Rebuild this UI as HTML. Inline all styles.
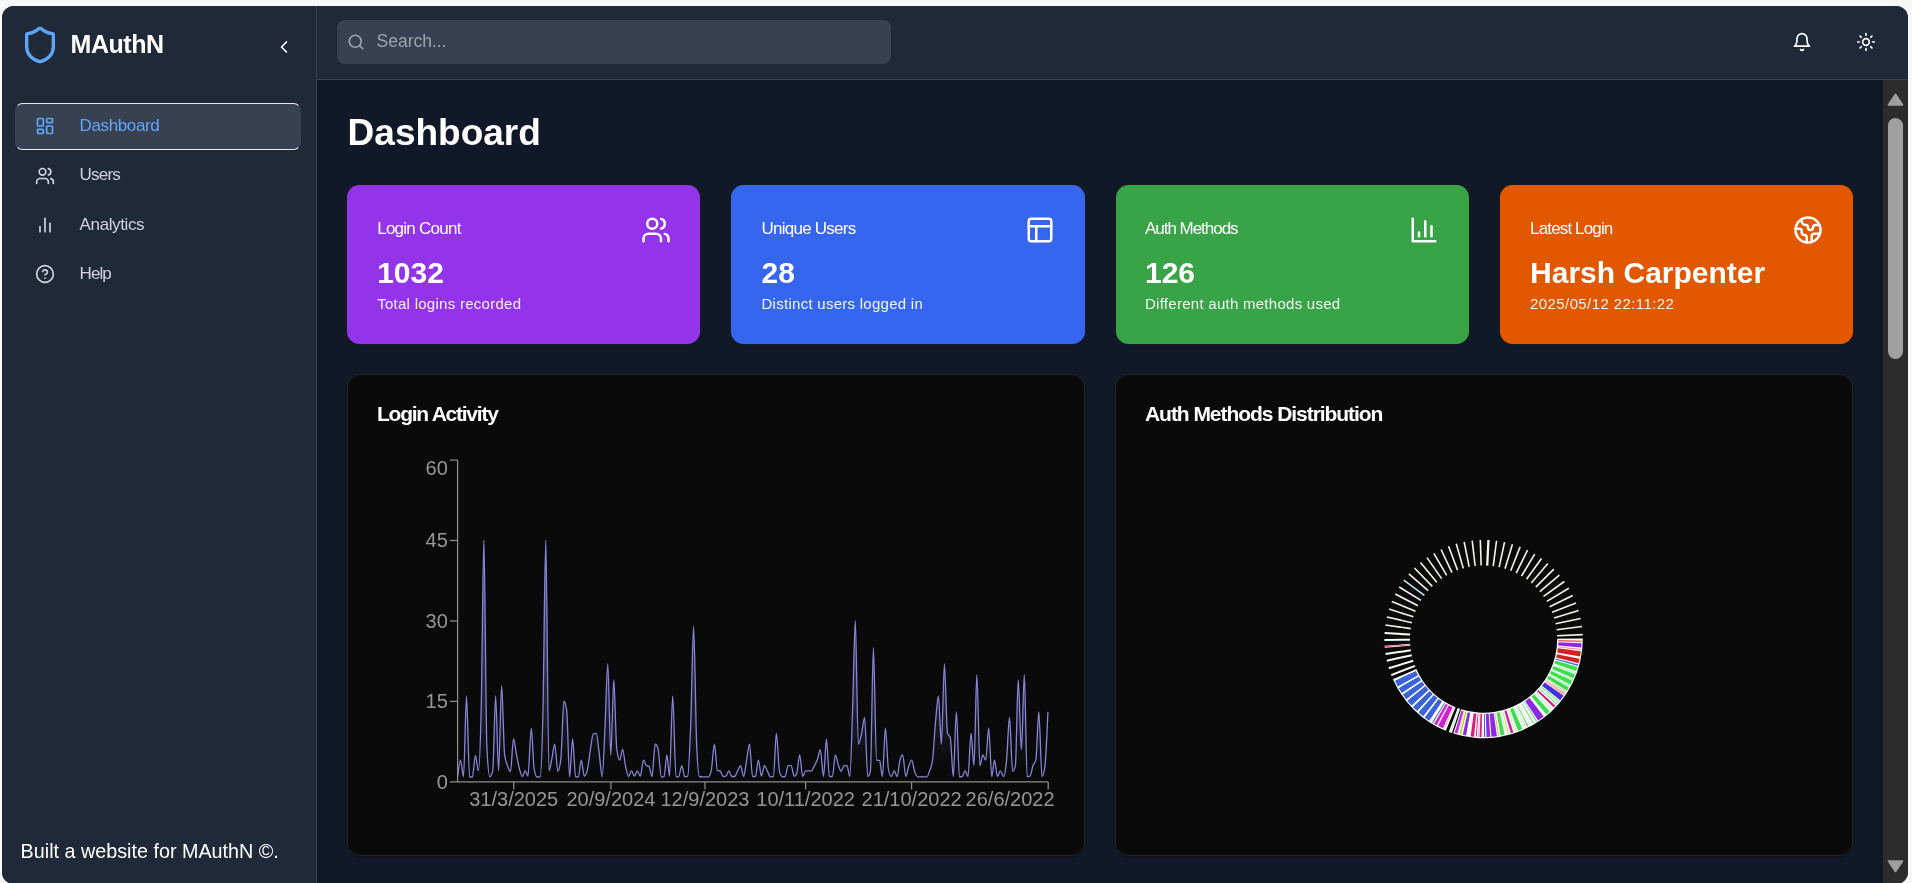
<!DOCTYPE html>
<html lang="en"><head><meta charset="utf-8"><title>MAuthN Dashboard</title>
<style>
html,body{margin:0;padding:0}
body{width:1912px;height:883px;overflow:hidden;background:#f7f7f7;font-family:"Liberation Sans",Arial,sans-serif;position:relative}
#app{position:absolute;left:2px;top:6px;width:1906px;height:878px;border-radius:12px;overflow:hidden;background:#111827}
#abs{will-change:transform;position:absolute;left:-2px;top:-6px;width:1912px;height:890px}
#abs>*{position:absolute}
.t{white-space:nowrap;line-height:1}
.ic{position:absolute;overflow:visible}
.box{box-sizing:border-box}
.card{box-sizing:border-box;border:1px solid #262626;border-radius:12.5px}
</style></head><body>
<div id="app"><div id="abs">

<div class="box" style="left:0;top:0;width:317px;height:890px;background:#1f2937;border-right:1px solid #374151"></div>
<div class="box" style="left:317px;top:0;width:1595px;height:80px;background:#1f2937;border-bottom:1px solid #374151"></div>
<div style="left:1883px;top:80px;width:25px;height:810px;background:#2c2c2c"></div>
<div style="left:1887.8px;top:117.6px;width:15.3px;height:241.5px;border-radius:8px;background:#9f9f9f"></div>
<svg style="left:1883px;top:80px" width="25" height="810"><path d="M12.5 14.5 L19.3 24.7 L5.7 24.7 Z" fill="#9f9f9f" stroke="#9f9f9f" stroke-width="2" stroke-linejoin="round"/><path d="M12.5 791.2 L19.3 781.2 L5.7 781.2 Z" fill="#9f9f9f" stroke="#9f9f9f" stroke-width="2" stroke-linejoin="round"/></svg>
<svg class="ic" style="left:20px;top:24.6px" width="40" height="40" viewBox="0 0 24 24" fill="none" stroke="#60a5fa" stroke-width="2" stroke-linecap="round" stroke-linejoin="round"><path d="M20 13c0 5-3.5 7.5-7.66 8.95a1 1 0 0 1-.67-.01C7.5 20.5 4 18 4 13V6a1 1 0 0 1 1-1c2 0 4.5-1.2 6.24-2.72a1.17 1.17 0 0 1 1.52 0C14.51 3.81 17 5 19 5a1 1 0 0 1 1 1z"/></svg>
<div class="t" style="left:70.50px;top:31.84px;font-size:25px;color:#fff;font-weight:700;letter-spacing:-0.45px;">MAuthN</div>
<svg class="ic" style="left:274px;top:36.7px" width="20" height="20" viewBox="0 0 24 24" fill="none" stroke="#fff" stroke-width="2" stroke-linecap="round" stroke-linejoin="round"><path d="m15 18-6-6 6-6"/></svg>
<div class="box" style="left:14.9px;top:102.7px;width:286.2px;height:47.7px;background:#374151;border:1.5px solid transparent;border-top-color:#e9e9e9;border-bottom-color:#e9e9e9;border-radius:7.5px"></div>
<svg class="ic" style="left:35px;top:116px" width="20" height="20" viewBox="0 0 24 24" fill="none" stroke="#60a5fa" stroke-width="2" stroke-linecap="round" stroke-linejoin="round"><rect width="7" height="9" x="3" y="3" rx="1"/><rect width="7" height="5" x="14" y="3" rx="1"/><rect width="7" height="9" x="14" y="12" rx="1"/><rect width="7" height="5" x="3" y="16" rx="1"/></svg>
<div class="t" style="left:79.60px;top:116.61px;font-size:17px;color:#60a5fa;letter-spacing:-0.38px;">Dashboard</div>
<svg class="ic" style="left:35px;top:166px" width="20" height="20" viewBox="0 0 24 24" fill="none" stroke="#d1d5db" stroke-width="2" stroke-linecap="round" stroke-linejoin="round"><path d="M16 21v-2a4 4 0 0 0-4-4H6a4 4 0 0 0-4 4v2"/><circle cx="9" cy="7" r="4"/><path d="M22 21v-2a4 4 0 0 0-3-3.87"/><path d="M16 3.13a4 4 0 0 1 0 7.75"/></svg>
<div class="t" style="left:79.60px;top:165.61px;font-size:17px;color:#d1d5db;letter-spacing:-0.8px;">Users</div>
<svg class="ic" style="left:35px;top:215px" width="20" height="20" viewBox="0 0 24 24" fill="none" stroke="#d1d5db" stroke-width="2" stroke-linecap="round" stroke-linejoin="round"><line x1="18" x2="18" y1="20" y2="10"/><line x1="12" x2="12" y1="20" y2="4"/><line x1="6" x2="6" y1="20" y2="14"/></svg>
<div class="t" style="left:79.60px;top:216.01px;font-size:17px;color:#d1d5db;letter-spacing:-0.38px;">Analytics</div>
<svg class="ic" style="left:35px;top:264px" width="20" height="20" viewBox="0 0 24 24" fill="none" stroke="#d1d5db" stroke-width="2" stroke-linecap="round" stroke-linejoin="round"><circle cx="12" cy="12" r="10"/><path d="M9.09 9a3 3 0 0 1 5.83 1c0 2-3 3-3 3"/><path d="M12 17h.01"/></svg>
<div class="t" style="left:79.60px;top:264.61px;font-size:17px;color:#d1d5db;letter-spacing:-0.95px;">Help</div>
<div class="t" style="left:20.60px;top:841.98px;font-size:19.75px;color:#fff;">Built a website for MAuthN ©.</div>
<div style="left:337px;top:20px;width:554px;height:44px;border-radius:8px;background:#374151"></div>
<svg class="ic" style="left:346.5px;top:32.5px" width="18" height="18" viewBox="0 0 24 24" fill="none" stroke="#9ca3af" stroke-width="2.2" stroke-linecap="round" stroke-linejoin="round"><circle cx="11" cy="11" r="8"/><path d="m21 21-4.3-4.3"/></svg>
<div class="t" style="left:376.50px;top:32.89px;font-size:17.5px;color:#9ca3af;">Search...</div>
<svg class="ic" style="left:1792px;top:32px" width="20" height="20" viewBox="0 0 24 24" fill="none" stroke="#fff" stroke-width="2" stroke-linecap="round" stroke-linejoin="round"><path d="M6 8a6 6 0 0 1 12 0c0 7 3 9 3 9H3s3-2 3-9"/><path d="M10.3 21a1.94 1.94 0 0 0 3.4 0"/></svg>
<svg class="ic" style="left:1856px;top:32px" width="20" height="20" viewBox="0 0 24 24" fill="none" stroke="#fff" stroke-width="2" stroke-linecap="round" stroke-linejoin="round"><circle cx="12" cy="12" r="4"/><path d="M12 2v2"/><path d="M12 20v2"/><path d="m4.93 4.93 1.41 1.41"/><path d="m17.66 17.66 1.41 1.41"/><path d="M2 12h2"/><path d="M20 12h2"/><path d="m6.34 17.66-1.41 1.41"/><path d="m19.07 4.93-1.41 1.41"/></svg>
<div class="t" style="left:347.60px;top:113.68px;font-size:37px;color:#fff;font-weight:700;">Dashboard</div>
<div style="left:347.0px;top:185px;width:353.3px;height:159px;border-radius:12.5px;box-shadow:0 0 0 0.7px #1a1f1a;background:#9333ea"></div>
<div class="t" style="left:377.20px;top:219.61px;font-size:17px;color:#fff;letter-spacing:-0.75px;">Login Count</div>
<div class="t" style="left:377.20px;top:258.41px;font-size:30px;color:#fff;font-weight:700;">1032</div>
<div class="t" style="left:377.20px;top:296.00px;font-size:15px;color:rgba(255,255,255,.93);letter-spacing:0.27px;">Total logins recorded</div>
<svg class="ic" style="left:641.3px;top:215px" width="30" height="30" viewBox="0 0 24 24" fill="none" stroke="#fff" stroke-width="2" stroke-linecap="round" stroke-linejoin="round"><path d="M16 21v-2a4 4 0 0 0-4-4H6a4 4 0 0 0-4 4v2"/><circle cx="9" cy="7" r="4"/><path d="M22 21v-2a4 4 0 0 0-3-3.87"/><path d="M16 3.13a4 4 0 0 1 0 7.75"/></svg>
<div style="left:731.3px;top:185px;width:353.3px;height:159px;border-radius:12.5px;box-shadow:0 0 0 0.7px #1a1f1a;background:#3766ee"></div>
<div class="t" style="left:761.50px;top:219.61px;font-size:17px;color:#fff;letter-spacing:-0.75px;">Unique Users</div>
<div class="t" style="left:761.50px;top:258.41px;font-size:30px;color:#fff;font-weight:700;">28</div>
<div class="t" style="left:761.50px;top:296.00px;font-size:15px;color:rgba(255,255,255,.93);letter-spacing:0.27px;">Distinct users logged in</div>
<svg class="ic" style="left:1024.9px;top:215px" width="30" height="30" viewBox="0 0 24 24" fill="none" stroke="#fff" stroke-width="2" stroke-linecap="round" stroke-linejoin="round"><rect width="18" height="18" x="3" y="3" rx="2"/><path d="M3 9h18"/><path d="M9 21V9"/></svg>
<div style="left:1115.6px;top:185px;width:353.3px;height:159px;border-radius:12.5px;box-shadow:0 0 0 0.7px #1a1f1a;background:#38a347"></div>
<div class="t" style="left:1145.00px;top:219.61px;font-size:17px;color:#fff;letter-spacing:-1.03px;">Auth Methods</div>
<div class="t" style="left:1145.00px;top:258.41px;font-size:30px;color:#fff;font-weight:700;">126</div>
<div class="t" style="left:1145.00px;top:296.00px;font-size:15px;color:rgba(255,255,255,.93);letter-spacing:0.27px;">Different auth methods used</div>
<svg class="ic" style="left:1409.2px;top:215px" width="30" height="30" viewBox="0 0 24 24" fill="none" stroke="#fff" stroke-width="2" stroke-linecap="round" stroke-linejoin="round"><path d="M3 3v18h18"/><path d="M18 17V9"/><path d="M13 17V5"/><path d="M8 17v-3"/></svg>
<div style="left:1499.9px;top:185px;width:353.3px;height:159px;border-radius:12.5px;box-shadow:0 0 0 0.7px #1a1f1a;background:#e25800"></div>
<div class="t" style="left:1530.10px;top:219.61px;font-size:17px;color:#fff;letter-spacing:-0.86px;">Latest Login</div>
<div class="t" style="left:1530.10px;top:258.41px;font-size:30px;color:#fff;font-weight:700;">Harsh Carpenter</div>
<div class="t" style="left:1530.10px;top:296.00px;font-size:15px;color:rgba(255,255,255,.93);letter-spacing:0.4px;">2025/05/12 22:11:22</div>
<svg class="ic" style="left:1793.4px;top:215px" width="30" height="30" viewBox="0 0 24 24" fill="none" stroke="#fff" stroke-width="2" stroke-linecap="round" stroke-linejoin="round"><path d="M21.54 15H17a2 2 0 0 0-2 2v4.54"/><path d="M7 3.34V5a3 3 0 0 0 3 3a2 2 0 0 1 2 2c0 1.1.9 2 2 2a2 2 0 0 0 2-2c0-1.1.9-2 2-2h3.17"/><path d="M11 21.95V18a2 2 0 0 0-2-2a2 2 0 0 1-2-2v-1a2 2 0 0 0-2-2H2.05"/><circle cx="12" cy="12" r="10"/></svg>
<div class="card" style="left:347px;top:374.4px;width:738px;height:481.5px;background:#0a0a0a;box-shadow:0 1px 2px rgba(0,0,0,.35)"></div>
<div class="card" style="left:1115px;top:374.4px;width:738px;height:481.5px;background:#0a0a0a;box-shadow:0 1px 2px rgba(0,0,0,.35)"></div>
<div class="t" style="left:377.00px;top:403.22px;font-size:21px;color:#fff;font-weight:700;letter-spacing:-1.25px;">Login Activity</div>
<div class="t" style="left:1145.00px;top:403.22px;font-size:21px;color:#fff;font-weight:700;letter-spacing:-1.05px;">Auth Methods Distribution</div>
<svg style="left:0;top:0" width="1912" height="883" font-family="Liberation Sans, Arial, sans-serif" font-size="20" fill="#969696">
<defs><linearGradient id="g" x1="0" y1="0" x2="0" y2="1"><stop offset="5%" stop-color="#8884d8" stop-opacity="0.55"/><stop offset="95%" stop-color="#8884d8" stop-opacity="0"/></linearGradient></defs>
<path d="M457.6,776.8C458.6,768.4,459.5,760.1,460.5,760.1C461.5,760.1,462.5,776.5,463.5,776.5C464.5,776.5,465.5,696.0,466.5,696.0C467.5,696.0,468.5,777.0,469.6,777.0C470.5,777.0,471.5,777.0,472.4,777.0C473.4,777.0,474.4,755.3,475.4,755.3C476.4,755.3,477.4,770.9,478.4,770.9C479.3,770.9,480.3,747.5,481.2,709.1C482.1,670.6,483.0,540.3,483.9,540.3C484.9,540.3,485.9,729.0,486.9,748.1C487.9,767.2,488.9,776.8,489.9,776.8C490.9,776.8,491.8,774.6,492.8,770.3C493.7,765.9,494.7,696.0,495.6,696.0C496.6,696.0,497.6,770.9,498.6,770.9C499.6,770.9,500.6,685.4,501.6,685.4C502.6,685.4,503.6,746.9,504.6,754.6C505.6,762.0,506.5,762.9,507.5,765.7C508.5,768.6,509.5,771.3,510.5,771.3C511.5,771.3,512.5,739.0,513.5,739.0C514.5,739.0,515.5,749.6,516.5,754.6C517.5,759.6,518.5,765.3,519.5,769.0C520.4,772.5,521.4,776.5,522.3,776.5C523.3,776.5,524.3,770.9,525.3,770.9C526.2,770.9,527.0,776.1,527.9,776.1C529.0,776.1,530.2,728.3,531.3,728.3C532.3,728.3,533.2,764.9,534.2,769.6C535.2,774.6,536.2,777.0,537.2,777.0C538.2,777.0,539.2,776.9,540.2,776.8C541.1,776.6,542.1,750.2,543.0,709.1C543.9,669.8,544.8,540.3,545.8,540.3C546.8,540.3,547.9,770.9,549.0,770.9C550.0,770.9,550.9,763.0,551.9,758.5C552.8,754.1,553.8,744.2,554.7,744.2C555.8,744.2,556.8,771.3,557.9,771.3C558.9,771.3,559.9,767.0,560.9,758.5C561.9,750.0,562.9,701.2,563.9,701.2C564.8,701.2,565.8,704.3,566.7,710.4C567.7,716.4,568.6,776.8,569.6,776.8C570.6,776.8,571.6,739.0,572.6,739.0C573.6,739.0,574.6,777.0,575.6,777.0C576.5,777.0,577.5,776.9,578.4,776.8C579.4,776.6,580.3,760.1,581.3,760.1C582.3,760.1,583.3,776.1,584.3,776.1C585.3,776.1,586.3,774.2,587.3,770.3C588.3,766.2,589.4,755.7,590.4,749.4C591.4,743.7,592.3,734.0,593.3,733.8C594.3,733.5,595.3,733.4,596.3,733.4C597.3,733.4,598.2,746.3,599.2,753.3C600.2,760.7,601.2,776.8,602.2,776.8C603.1,776.8,604.1,746.7,605.0,727.3C605.9,708.8,606.8,663.8,607.8,663.8C608.8,663.8,609.8,755.3,610.8,755.3C611.8,755.3,612.8,679.8,613.8,679.8C614.7,679.8,615.7,740.1,616.7,748.1C617.7,756.1,618.7,760.1,619.7,760.1C620.7,760.1,621.6,749.4,622.6,749.4C623.6,749.4,624.6,761.8,625.6,766.4C626.6,770.9,627.6,776.5,628.6,776.5C629.5,776.5,630.5,770.9,631.5,770.9C632.5,770.9,633.5,776.1,634.5,776.1C635.4,776.1,636.4,770.9,637.3,770.9C638.3,770.9,639.3,776.1,640.3,776.1C641.4,776.1,642.4,760.1,643.4,760.1C644.4,760.1,645.4,765.2,646.4,765.7C647.3,766.1,648.2,765.9,649.0,766.4C650.0,766.9,651.0,776.5,652.0,776.5C653.1,776.5,654.1,744.2,655.2,744.2C656.1,744.2,657.0,745.5,657.9,748.1C659.1,751.5,660.2,776.8,661.4,776.8C662.3,776.8,663.1,776.8,664.0,776.8C665.0,776.8,665.9,754.9,666.9,754.9C667.7,754.9,668.6,776.1,669.5,776.1C670.6,776.1,671.6,696.0,672.7,696.0C673.8,696.0,674.9,776.8,676.0,776.8C676.9,776.8,677.8,776.8,678.7,776.8C679.7,776.8,680.7,765.7,681.7,765.7C682.8,765.7,683.8,776.8,684.8,776.8C685.8,776.8,686.8,776.6,687.7,776.1C688.7,775.7,689.7,750.6,690.7,724.7C691.7,699.9,692.6,626.1,693.6,626.1C694.6,626.1,695.6,719.5,696.6,742.9C697.5,765.3,698.5,776.3,699.4,776.5C700.4,776.7,701.4,776.8,702.4,776.8C703.4,776.8,704.4,776.8,705.4,776.8C706.4,776.8,707.3,776.8,708.3,776.8C709.3,776.8,710.3,774.6,711.3,770.3C712.3,765.7,713.4,744.2,714.4,744.2C715.4,744.2,716.4,769.8,717.4,770.3C718.3,770.7,719.1,770.5,720.0,770.9C721.1,771.5,722.2,776.5,723.3,776.5C724.1,776.5,725.0,776.4,725.9,776.1C726.9,775.8,727.9,770.9,728.9,770.9C729.8,770.9,730.8,776.5,731.7,776.5C732.7,776.5,733.6,776.5,734.6,776.5C735.6,776.5,736.6,772.7,737.6,770.9C738.6,769.1,739.6,765.7,740.6,765.7C741.6,765.7,742.6,776.5,743.6,776.5C744.5,776.5,745.5,766.4,746.5,761.1C747.5,755.7,748.5,744.2,749.5,744.2C750.5,744.2,751.5,776.5,752.6,776.5C753.5,776.5,754.5,776.5,755.4,776.5C756.4,776.5,757.4,760.1,758.4,760.1C759.4,760.1,760.4,776.1,761.4,776.1C762.4,776.1,763.4,765.7,764.4,765.7C765.5,765.7,766.5,769.6,767.6,771.6C768.5,773.3,769.5,776.8,770.4,776.8C771.4,776.8,772.4,776.7,773.4,776.5C774.4,776.3,775.4,733.4,776.4,733.4C777.4,733.4,778.5,767.9,779.5,771.6C780.5,775.0,781.5,776.8,782.5,776.8C783.4,776.8,784.3,776.7,785.1,776.5C786.1,776.3,787.1,765.7,788.1,765.7C789.1,765.7,790.0,765.7,791.0,765.7C792.1,765.7,793.2,776.1,794.2,776.1C795.1,776.1,796.0,775.0,796.8,772.9C797.8,770.5,798.8,754.9,799.7,754.9C800.7,754.9,801.7,776.5,802.7,776.5C803.7,776.5,804.7,770.9,805.7,770.9C806.7,770.9,807.6,770.9,808.6,770.9C809.6,770.9,810.6,770.9,811.6,770.9C812.5,770.9,813.5,767.5,814.4,765.7C815.4,763.9,816.3,762.4,817.3,759.8C818.3,757.1,819.3,749.7,820.3,749.7C821.4,749.7,822.5,776.5,823.5,776.5C824.5,776.5,825.5,739.0,826.4,739.0C827.4,739.0,828.4,776.5,829.4,776.5C830.4,776.5,831.4,776.5,832.4,776.5C833.4,776.5,834.4,754.9,835.4,754.9C836.4,754.9,837.5,762.8,838.5,765.7C839.4,768.1,840.3,771.3,841.1,771.3C842.1,771.3,843.1,765.7,844.1,765.7C845.1,765.7,846.0,765.7,847.0,765.7C847.9,765.7,848.9,776.5,849.8,776.5C850.8,776.5,851.7,735.0,852.6,709.1C853.5,683.1,854.4,620.8,855.3,620.8C856.3,620.8,857.3,744.2,858.3,744.2C859.3,744.2,860.3,739.3,861.3,735.1C862.4,730.6,863.5,717.5,864.6,717.5C865.6,717.5,866.7,776.5,867.8,776.5C868.7,776.5,869.5,774.9,870.4,771.6C871.4,767.8,872.4,647.6,873.4,647.6C874.5,647.6,875.5,759.8,876.6,760.1C877.6,760.4,878.6,760.2,879.6,760.5C880.5,760.7,881.5,776.5,882.4,776.5C883.4,776.5,884.4,728.2,885.4,728.2C886.4,728.2,887.4,763.7,888.4,769.0C889.4,774.0,890.3,776.5,891.3,776.5C892.3,776.5,893.3,770.9,894.3,770.9C895.2,770.9,896.2,776.5,897.1,776.5C898.1,776.5,899.0,763.4,900.0,759.8C900.9,756.6,901.7,754.9,902.6,754.9C903.7,754.9,904.8,776.5,905.9,776.5C906.9,776.5,907.9,768.5,908.9,765.7C909.8,763.1,910.8,760.1,911.7,760.1C912.7,760.1,913.7,768.8,914.7,771.6C915.7,774.3,916.7,776.8,917.7,776.8C918.7,776.8,919.6,776.8,920.6,776.8C921.6,776.8,922.6,776.8,923.6,776.8C924.7,776.8,925.7,776.8,926.8,776.8C927.8,776.8,928.7,773.7,929.7,770.9C930.6,768.1,931.6,767.2,932.6,759.8C933.6,752.1,934.5,732.9,935.5,722.1C936.5,711.8,937.5,696.0,938.4,696.0C939.4,696.0,940.4,744.2,941.4,744.2C942.4,744.2,943.4,663.8,944.4,663.8C945.4,663.8,946.5,730.1,947.5,733.4C948.4,736.3,949.3,734.8,950.3,737.7C951.3,740.8,952.3,776.5,953.3,776.5C954.3,776.5,955.3,711.9,956.4,711.9C957.4,711.9,958.4,776.8,959.4,776.8C960.3,776.8,961.3,776.7,962.2,776.5C963.2,776.3,964.1,770.9,965.1,770.9C966.1,770.9,967.0,776.5,968.0,776.5C969.0,776.5,970.0,733.4,971.0,733.4C972.0,733.4,973.0,765.7,974.0,765.7C974.9,765.7,975.9,674.6,976.8,674.6C977.9,674.6,978.9,765.7,979.9,765.7C980.9,765.7,981.9,754.9,982.8,754.9C983.8,754.9,984.7,760.1,985.7,760.1C986.7,760.1,987.7,728.2,988.7,728.2C989.7,728.2,990.8,776.5,991.8,776.5C992.7,776.5,993.6,760.1,994.5,760.1C995.5,760.1,996.4,776.5,997.4,776.5C998.4,776.5,999.3,770.9,1000.3,770.9C1001.3,770.9,1002.4,776.5,1003.5,776.5C1004.5,776.5,1005.5,771.0,1006.5,761.1C1007.5,751.3,1008.5,717.5,1009.5,717.5C1010.5,717.5,1011.6,771.3,1012.6,771.3C1013.5,771.3,1014.5,769.4,1015.4,765.7C1016.3,761.8,1017.3,679.8,1018.2,679.8C1019.3,679.8,1020.3,749.7,1021.4,749.7C1022.4,749.7,1023.4,674.6,1024.3,674.6C1025.3,674.6,1026.2,776.5,1027.1,776.5C1028.1,776.5,1029.1,776.4,1030.1,776.1C1031.0,775.9,1032.0,768.4,1032.9,765.7C1033.9,762.9,1034.9,763.8,1035.9,759.8C1036.9,756.1,1037.8,711.9,1038.8,711.9C1039.9,711.9,1040.9,776.5,1042.0,776.5C1043.0,776.5,1043.9,773.1,1044.9,766.4C1045.9,759.3,1046.9,735.6,1047.9,711.9L1047.9,781.8L457.6,781.8Z" fill="url(#g)" stroke="none"/>
<path d="M457.6,776.8C458.6,768.4,459.5,760.1,460.5,760.1C461.5,760.1,462.5,776.5,463.5,776.5C464.5,776.5,465.5,696.0,466.5,696.0C467.5,696.0,468.5,777.0,469.6,777.0C470.5,777.0,471.5,777.0,472.4,777.0C473.4,777.0,474.4,755.3,475.4,755.3C476.4,755.3,477.4,770.9,478.4,770.9C479.3,770.9,480.3,747.5,481.2,709.1C482.1,670.6,483.0,540.3,483.9,540.3C484.9,540.3,485.9,729.0,486.9,748.1C487.9,767.2,488.9,776.8,489.9,776.8C490.9,776.8,491.8,774.6,492.8,770.3C493.7,765.9,494.7,696.0,495.6,696.0C496.6,696.0,497.6,770.9,498.6,770.9C499.6,770.9,500.6,685.4,501.6,685.4C502.6,685.4,503.6,746.9,504.6,754.6C505.6,762.0,506.5,762.9,507.5,765.7C508.5,768.6,509.5,771.3,510.5,771.3C511.5,771.3,512.5,739.0,513.5,739.0C514.5,739.0,515.5,749.6,516.5,754.6C517.5,759.6,518.5,765.3,519.5,769.0C520.4,772.5,521.4,776.5,522.3,776.5C523.3,776.5,524.3,770.9,525.3,770.9C526.2,770.9,527.0,776.1,527.9,776.1C529.0,776.1,530.2,728.3,531.3,728.3C532.3,728.3,533.2,764.9,534.2,769.6C535.2,774.6,536.2,777.0,537.2,777.0C538.2,777.0,539.2,776.9,540.2,776.8C541.1,776.6,542.1,750.2,543.0,709.1C543.9,669.8,544.8,540.3,545.8,540.3C546.8,540.3,547.9,770.9,549.0,770.9C550.0,770.9,550.9,763.0,551.9,758.5C552.8,754.1,553.8,744.2,554.7,744.2C555.8,744.2,556.8,771.3,557.9,771.3C558.9,771.3,559.9,767.0,560.9,758.5C561.9,750.0,562.9,701.2,563.9,701.2C564.8,701.2,565.8,704.3,566.7,710.4C567.7,716.4,568.6,776.8,569.6,776.8C570.6,776.8,571.6,739.0,572.6,739.0C573.6,739.0,574.6,777.0,575.6,777.0C576.5,777.0,577.5,776.9,578.4,776.8C579.4,776.6,580.3,760.1,581.3,760.1C582.3,760.1,583.3,776.1,584.3,776.1C585.3,776.1,586.3,774.2,587.3,770.3C588.3,766.2,589.4,755.7,590.4,749.4C591.4,743.7,592.3,734.0,593.3,733.8C594.3,733.5,595.3,733.4,596.3,733.4C597.3,733.4,598.2,746.3,599.2,753.3C600.2,760.7,601.2,776.8,602.2,776.8C603.1,776.8,604.1,746.7,605.0,727.3C605.9,708.8,606.8,663.8,607.8,663.8C608.8,663.8,609.8,755.3,610.8,755.3C611.8,755.3,612.8,679.8,613.8,679.8C614.7,679.8,615.7,740.1,616.7,748.1C617.7,756.1,618.7,760.1,619.7,760.1C620.7,760.1,621.6,749.4,622.6,749.4C623.6,749.4,624.6,761.8,625.6,766.4C626.6,770.9,627.6,776.5,628.6,776.5C629.5,776.5,630.5,770.9,631.5,770.9C632.5,770.9,633.5,776.1,634.5,776.1C635.4,776.1,636.4,770.9,637.3,770.9C638.3,770.9,639.3,776.1,640.3,776.1C641.4,776.1,642.4,760.1,643.4,760.1C644.4,760.1,645.4,765.2,646.4,765.7C647.3,766.1,648.2,765.9,649.0,766.4C650.0,766.9,651.0,776.5,652.0,776.5C653.1,776.5,654.1,744.2,655.2,744.2C656.1,744.2,657.0,745.5,657.9,748.1C659.1,751.5,660.2,776.8,661.4,776.8C662.3,776.8,663.1,776.8,664.0,776.8C665.0,776.8,665.9,754.9,666.9,754.9C667.7,754.9,668.6,776.1,669.5,776.1C670.6,776.1,671.6,696.0,672.7,696.0C673.8,696.0,674.9,776.8,676.0,776.8C676.9,776.8,677.8,776.8,678.7,776.8C679.7,776.8,680.7,765.7,681.7,765.7C682.8,765.7,683.8,776.8,684.8,776.8C685.8,776.8,686.8,776.6,687.7,776.1C688.7,775.7,689.7,750.6,690.7,724.7C691.7,699.9,692.6,626.1,693.6,626.1C694.6,626.1,695.6,719.5,696.6,742.9C697.5,765.3,698.5,776.3,699.4,776.5C700.4,776.7,701.4,776.8,702.4,776.8C703.4,776.8,704.4,776.8,705.4,776.8C706.4,776.8,707.3,776.8,708.3,776.8C709.3,776.8,710.3,774.6,711.3,770.3C712.3,765.7,713.4,744.2,714.4,744.2C715.4,744.2,716.4,769.8,717.4,770.3C718.3,770.7,719.1,770.5,720.0,770.9C721.1,771.5,722.2,776.5,723.3,776.5C724.1,776.5,725.0,776.4,725.9,776.1C726.9,775.8,727.9,770.9,728.9,770.9C729.8,770.9,730.8,776.5,731.7,776.5C732.7,776.5,733.6,776.5,734.6,776.5C735.6,776.5,736.6,772.7,737.6,770.9C738.6,769.1,739.6,765.7,740.6,765.7C741.6,765.7,742.6,776.5,743.6,776.5C744.5,776.5,745.5,766.4,746.5,761.1C747.5,755.7,748.5,744.2,749.5,744.2C750.5,744.2,751.5,776.5,752.6,776.5C753.5,776.5,754.5,776.5,755.4,776.5C756.4,776.5,757.4,760.1,758.4,760.1C759.4,760.1,760.4,776.1,761.4,776.1C762.4,776.1,763.4,765.7,764.4,765.7C765.5,765.7,766.5,769.6,767.6,771.6C768.5,773.3,769.5,776.8,770.4,776.8C771.4,776.8,772.4,776.7,773.4,776.5C774.4,776.3,775.4,733.4,776.4,733.4C777.4,733.4,778.5,767.9,779.5,771.6C780.5,775.0,781.5,776.8,782.5,776.8C783.4,776.8,784.3,776.7,785.1,776.5C786.1,776.3,787.1,765.7,788.1,765.7C789.1,765.7,790.0,765.7,791.0,765.7C792.1,765.7,793.2,776.1,794.2,776.1C795.1,776.1,796.0,775.0,796.8,772.9C797.8,770.5,798.8,754.9,799.7,754.9C800.7,754.9,801.7,776.5,802.7,776.5C803.7,776.5,804.7,770.9,805.7,770.9C806.7,770.9,807.6,770.9,808.6,770.9C809.6,770.9,810.6,770.9,811.6,770.9C812.5,770.9,813.5,767.5,814.4,765.7C815.4,763.9,816.3,762.4,817.3,759.8C818.3,757.1,819.3,749.7,820.3,749.7C821.4,749.7,822.5,776.5,823.5,776.5C824.5,776.5,825.5,739.0,826.4,739.0C827.4,739.0,828.4,776.5,829.4,776.5C830.4,776.5,831.4,776.5,832.4,776.5C833.4,776.5,834.4,754.9,835.4,754.9C836.4,754.9,837.5,762.8,838.5,765.7C839.4,768.1,840.3,771.3,841.1,771.3C842.1,771.3,843.1,765.7,844.1,765.7C845.1,765.7,846.0,765.7,847.0,765.7C847.9,765.7,848.9,776.5,849.8,776.5C850.8,776.5,851.7,735.0,852.6,709.1C853.5,683.1,854.4,620.8,855.3,620.8C856.3,620.8,857.3,744.2,858.3,744.2C859.3,744.2,860.3,739.3,861.3,735.1C862.4,730.6,863.5,717.5,864.6,717.5C865.6,717.5,866.7,776.5,867.8,776.5C868.7,776.5,869.5,774.9,870.4,771.6C871.4,767.8,872.4,647.6,873.4,647.6C874.5,647.6,875.5,759.8,876.6,760.1C877.6,760.4,878.6,760.2,879.6,760.5C880.5,760.7,881.5,776.5,882.4,776.5C883.4,776.5,884.4,728.2,885.4,728.2C886.4,728.2,887.4,763.7,888.4,769.0C889.4,774.0,890.3,776.5,891.3,776.5C892.3,776.5,893.3,770.9,894.3,770.9C895.2,770.9,896.2,776.5,897.1,776.5C898.1,776.5,899.0,763.4,900.0,759.8C900.9,756.6,901.7,754.9,902.6,754.9C903.7,754.9,904.8,776.5,905.9,776.5C906.9,776.5,907.9,768.5,908.9,765.7C909.8,763.1,910.8,760.1,911.7,760.1C912.7,760.1,913.7,768.8,914.7,771.6C915.7,774.3,916.7,776.8,917.7,776.8C918.7,776.8,919.6,776.8,920.6,776.8C921.6,776.8,922.6,776.8,923.6,776.8C924.7,776.8,925.7,776.8,926.8,776.8C927.8,776.8,928.7,773.7,929.7,770.9C930.6,768.1,931.6,767.2,932.6,759.8C933.6,752.1,934.5,732.9,935.5,722.1C936.5,711.8,937.5,696.0,938.4,696.0C939.4,696.0,940.4,744.2,941.4,744.2C942.4,744.2,943.4,663.8,944.4,663.8C945.4,663.8,946.5,730.1,947.5,733.4C948.4,736.3,949.3,734.8,950.3,737.7C951.3,740.8,952.3,776.5,953.3,776.5C954.3,776.5,955.3,711.9,956.4,711.9C957.4,711.9,958.4,776.8,959.4,776.8C960.3,776.8,961.3,776.7,962.2,776.5C963.2,776.3,964.1,770.9,965.1,770.9C966.1,770.9,967.0,776.5,968.0,776.5C969.0,776.5,970.0,733.4,971.0,733.4C972.0,733.4,973.0,765.7,974.0,765.7C974.9,765.7,975.9,674.6,976.8,674.6C977.9,674.6,978.9,765.7,979.9,765.7C980.9,765.7,981.9,754.9,982.8,754.9C983.8,754.9,984.7,760.1,985.7,760.1C986.7,760.1,987.7,728.2,988.7,728.2C989.7,728.2,990.8,776.5,991.8,776.5C992.7,776.5,993.6,760.1,994.5,760.1C995.5,760.1,996.4,776.5,997.4,776.5C998.4,776.5,999.3,770.9,1000.3,770.9C1001.3,770.9,1002.4,776.5,1003.5,776.5C1004.5,776.5,1005.5,771.0,1006.5,761.1C1007.5,751.3,1008.5,717.5,1009.5,717.5C1010.5,717.5,1011.6,771.3,1012.6,771.3C1013.5,771.3,1014.5,769.4,1015.4,765.7C1016.3,761.8,1017.3,679.8,1018.2,679.8C1019.3,679.8,1020.3,749.7,1021.4,749.7C1022.4,749.7,1023.4,674.6,1024.3,674.6C1025.3,674.6,1026.2,776.5,1027.1,776.5C1028.1,776.5,1029.1,776.4,1030.1,776.1C1031.0,775.9,1032.0,768.4,1032.9,765.7C1033.9,762.9,1034.9,763.8,1035.9,759.8C1036.9,756.1,1037.8,711.9,1038.8,711.9C1039.9,711.9,1040.9,776.5,1042.0,776.5C1043.0,776.5,1043.9,773.1,1044.9,766.4C1045.9,759.3,1046.9,735.6,1047.9,711.9" fill="none" stroke="#8884d8" stroke-width="1.3"/>
<g stroke="#8e8e8e" stroke-width="1.25" fill="none">
<path d="M457.6,460V781.9"/><path d="M457.6,781.9H1048.2"/>
<path d="M450,460.1H457.6"/>
<path d="M450,540.5H457.6"/>
<path d="M450,621H457.6"/>
<path d="M450,701.4H457.6"/>
<path d="M450,781.9H457.6"/>
<path d="M513.7,781.9V789.4"/>
<path d="M610.9,781.9V789.4"/>
<path d="M705,781.9V789.4"/>
<path d="M805.6,781.9V789.4"/>
<path d="M911.6,781.9V789.4"/>
<path d="M1048.2,781.9V789.4"/>
</g>
<text x="447.8" y="475.2" text-anchor="end">60</text>
<text x="447.8" y="547.3" text-anchor="end">45</text>
<text x="447.8" y="627.8" text-anchor="end">30</text>
<text x="447.8" y="708.2" text-anchor="end">15</text>
<text x="447.8" y="788.7" text-anchor="end">0</text>
<text x="513.7" y="805.9" text-anchor="middle">31/3/2025</text>
<text x="610.9" y="805.9" text-anchor="middle">20/9/2024</text>
<text x="705" y="805.9" text-anchor="middle">12/9/2023</text>
<text x="805.6" y="805.9" text-anchor="middle">10/11/2022</text>
<text x="911.6" y="805.9" text-anchor="middle">21/10/2022</text>
<text x="1054.6" y="805.9" text-anchor="end">26/6/2022</text>
<line x1="1557.12" y1="635.76" x2="1582.70" y2="634.60" stroke="#f4f4ee" stroke-width="1.6"/>
<line x1="1556.60" y1="629.75" x2="1582.00" y2="626.50" stroke="#f4f4ee" stroke-width="1.6"/>
<line x1="1555.59" y1="623.80" x2="1580.63" y2="618.48" stroke="#f4f4ee" stroke-width="1.6"/>
<line x1="1554.10" y1="617.95" x2="1578.62" y2="610.59" stroke="#f4f4ee" stroke-width="1.6"/>
<line x1="1552.13" y1="612.25" x2="1575.96" y2="602.90" stroke="#f4f4ee" stroke-width="1.6"/>
<line x1="1549.69" y1="606.72" x2="1572.68" y2="595.46" stroke="#f4f4ee" stroke-width="1.6"/>
<line x1="1546.82" y1="601.41" x2="1568.81" y2="588.31" stroke="#f4f4ee" stroke-width="1.6"/>
<line x1="1543.52" y1="596.36" x2="1564.36" y2="581.49" stroke="#f4f4ee" stroke-width="1.6"/>
<line x1="1539.82" y1="591.59" x2="1559.37" y2="575.07" stroke="#f4f4ee" stroke-width="1.6"/>
<line x1="1535.73" y1="587.15" x2="1553.87" y2="569.08" stroke="#f4f4ee" stroke-width="1.6"/>
<line x1="1531.30" y1="583.05" x2="1547.89" y2="563.56" stroke="#f4f4ee" stroke-width="1.6"/>
<line x1="1526.55" y1="579.33" x2="1541.49" y2="558.54" stroke="#f4f4ee" stroke-width="1.6"/>
<line x1="1521.51" y1="576.01" x2="1534.69" y2="554.07" stroke="#f4f4ee" stroke-width="1.6"/>
<line x1="1516.21" y1="573.12" x2="1527.55" y2="550.17" stroke="#f4f4ee" stroke-width="1.6"/>
<line x1="1510.69" y1="570.67" x2="1520.12" y2="546.87" stroke="#f4f4ee" stroke-width="1.6"/>
<line x1="1505.00" y1="568.68" x2="1512.44" y2="544.18" stroke="#f4f4ee" stroke-width="1.6"/>
<line x1="1499.15" y1="567.16" x2="1504.56" y2="542.14" stroke="#f4f4ee" stroke-width="1.6"/>
<line x1="1493.21" y1="566.13" x2="1496.55" y2="540.75" stroke="#f4f4ee" stroke-width="1.6"/>
<line x1="1487.20" y1="565.59" x2="1488.45" y2="540.02" stroke="#f4f4ee" stroke-width="2.3"/>
<line x1="1481.16" y1="565.54" x2="1480.31" y2="539.95" stroke="#f4f4ee" stroke-width="1.6"/>
<line x1="1475.14" y1="565.99" x2="1472.20" y2="540.56" stroke="#f4f4ee" stroke-width="1.6"/>
<line x1="1469.18" y1="566.93" x2="1464.16" y2="541.82" stroke="#f4f4ee" stroke-width="1.6"/>
<line x1="1463.31" y1="568.35" x2="1456.26" y2="543.74" stroke="#f4f4ee" stroke-width="1.6"/>
<line x1="1457.58" y1="570.25" x2="1448.54" y2="546.30" stroke="#f4f4ee" stroke-width="1.6"/>
<line x1="1452.03" y1="572.61" x2="1441.05" y2="549.49" stroke="#f4f4ee" stroke-width="1.6"/>
<line x1="1446.69" y1="575.42" x2="1433.85" y2="553.28" stroke="#f4f4ee" stroke-width="1.6"/>
<line x1="1441.60" y1="578.66" x2="1426.99" y2="557.64" stroke="#f4f4ee" stroke-width="1.6"/>
<line x1="1436.78" y1="582.31" x2="1420.50" y2="562.55" stroke="#f4f4ee" stroke-width="1.6"/>
<line x1="1432.29" y1="586.34" x2="1414.44" y2="567.98" stroke="#f4f4ee" stroke-width="1.6"/>
<line x1="1428.14" y1="590.72" x2="1408.85" y2="573.89" stroke="#f4f4ee" stroke-width="1.6"/>
<line x1="1424.36" y1="595.42" x2="1403.75" y2="580.23" stroke="#c4e8f8" stroke-width="1.6"/>
<line x1="1420.98" y1="600.43" x2="1399.20" y2="586.97" stroke="#f4f4ee" stroke-width="1.6"/>
<line x1="1418.02" y1="605.69" x2="1395.21" y2="594.06" stroke="#f4f4ee" stroke-width="1.6"/>
<line x1="1415.50" y1="611.17" x2="1391.82" y2="601.46" stroke="#f4f4ee" stroke-width="1.6"/>
<line x1="1413.45" y1="616.85" x2="1389.04" y2="609.10" stroke="#f4f4ee" stroke-width="1.6"/>
<line x1="1411.86" y1="622.67" x2="1386.90" y2="616.95" stroke="#f4f4ee" stroke-width="1.6"/>
<line x1="1410.75" y1="628.60" x2="1385.41" y2="624.95" stroke="#f4f4ee" stroke-width="1.6"/>
<line x1="1410.14" y1="634.61" x2="1384.59" y2="633.04" stroke="#fafaf6" stroke-width="2.0"/>
<line x1="1410.00" y1="639.74" x2="1384.40" y2="639.97" stroke="#fafaf6" stroke-width="2.0"/>
<line x1="1410.22" y1="644.75" x2="1384.69" y2="646.71" stroke="#fafaf6" stroke-width="2.0"/>
<line x1="1410.22" y1="644.75" x2="1384.69" y2="646.71" stroke="#e04060" stroke-width="0.8"/>
<line x1="1410.85" y1="650.23" x2="1385.54" y2="654.11" stroke="#fafaf6" stroke-width="2.0"/>
<line x1="1411.77" y1="655.16" x2="1386.79" y2="660.74" stroke="#fafaf6" stroke-width="2.0"/>
<line x1="1413.25" y1="660.74" x2="1388.79" y2="668.27" stroke="#fafaf6" stroke-width="2.0"/>
<line x1="1415.03" y1="665.84" x2="1391.18" y2="675.13" stroke="#fafaf6" stroke-width="2.0"/>
<path d="M1392.91,679.29A99.2,99.2,0,0,0,1445.80,730.81L1455.55,707.15A73.6,73.6,0,0,1,1416.31,668.92Z" fill="#ffffff"/>
<path d="M1448.70,731.96A99.2,99.2,0,0,0,1451.96,733.12L1460.12,708.86A73.6,73.6,0,0,1,1457.70,707.99Z" fill="#ffffff"/>
<path d="M1453.28,733.55A99.2,99.2,0,0,0,1582.80,638.58L1557.20,638.71A73.6,73.6,0,0,1,1461.10,709.18Z" fill="#ffffff"/>
<path d="M1394.89,680.75A98.0,98.0,0,0,0,1397.80,686.46L1418.12,675.25A74.8,74.8,0,0,1,1415.89,670.89Z" fill="#3a63d8"/>
<path d="M1398.73,688.10A98.0,98.0,0,0,0,1401.78,693.05L1421.15,680.28A74.8,74.8,0,0,1,1418.82,676.50Z" fill="#3a63d8"/>
<path d="M1402.84,694.61A98.0,98.0,0,0,0,1406.22,699.23L1424.54,685.00A74.8,74.8,0,0,1,1421.96,681.47Z" fill="#3a63d8"/>
<path d="M1407.39,700.71A98.0,98.0,0,0,0,1411.64,705.62L1428.67,689.87A74.8,74.8,0,0,1,1425.43,686.12Z" fill="#3a63d8"/>
<path d="M1412.93,706.99A98.0,98.0,0,0,0,1417.08,711.06L1432.83,694.03A74.8,74.8,0,0,1,1429.66,690.92Z" fill="#3a63d8"/>
<path d="M1418.47,712.33A98.0,98.0,0,0,0,1423.20,716.27L1437.50,698.00A74.8,74.8,0,0,1,1433.89,694.99Z" fill="#3a63d8"/>
<path d="M1424.69,717.42A98.0,98.0,0,0,0,1429.30,720.68L1442.15,701.37A74.8,74.8,0,0,1,1438.64,698.88Z" fill="#3a63d8"/>
<path d="M1432.10,722.48A98.0,98.0,0,0,0,1432.98,723.01L1444.96,703.15A74.8,74.8,0,0,1,1444.29,702.74Z" fill="#3a63d8"/>
<path d="M1434.16,723.71A98.0,98.0,0,0,0,1436.69,725.14L1447.79,704.77A74.8,74.8,0,0,1,1445.86,703.68Z" fill="#cf22cf"/>
<path d="M1438.05,725.87A98.0,98.0,0,0,0,1442.96,728.28L1452.58,707.17A74.8,74.8,0,0,1,1448.83,705.33Z" fill="#cf22cf"/>
<path d="M1443.90,728.70A98.0,98.0,0,0,0,1444.52,728.97L1453.77,707.70A74.8,74.8,0,0,1,1453.30,707.49Z" fill="#f0a040"/>
<path d="M1450.24,731.25A98.0,98.0,0,0,0,1450.89,731.48L1458.63,709.61A74.8,74.8,0,0,1,1458.14,709.43Z" fill="#8fe8a8"/>
<path d="M1454.62,732.72A98.0,98.0,0,0,0,1457.41,733.54L1463.61,711.18A74.8,74.8,0,0,1,1461.48,710.55Z" fill="#c030e0"/>
<path d="M1458.24,733.76A98.0,98.0,0,0,0,1458.73,733.89L1464.62,711.45A74.8,74.8,0,0,1,1464.24,711.35Z" fill="#b8b8b8"/>
<path d="M1459.56,734.11A98.0,98.0,0,0,0,1461.22,734.51L1466.52,711.92A74.8,74.8,0,0,1,1465.25,711.61Z" fill="#bcd818"/>
<path d="M1462.72,734.85A98.0,98.0,0,0,0,1466.08,735.52L1470.23,712.69A74.8,74.8,0,0,1,1467.67,712.18Z" fill="#8a2be2"/>
<path d="M1470.64,736.24A98.0,98.0,0,0,0,1474.04,736.63L1476.30,713.54A74.8,74.8,0,0,1,1473.71,713.24Z" fill="#d81e7a"/>
<path d="M1475.74,736.78A98.0,98.0,0,0,0,1476.76,736.86L1478.38,713.72A74.8,74.8,0,0,1,1477.60,713.66Z" fill="#d81e7a"/>
<path d="M1477.96,736.94A98.0,98.0,0,0,0,1478.47,736.97L1479.69,713.80A74.8,74.8,0,0,1,1479.29,713.78Z" fill="#f080b8"/>
<path d="M1479.50,737.01A98.0,98.0,0,0,0,1481.55,737.08L1482.03,713.88A74.8,74.8,0,0,1,1480.47,713.83Z" fill="#d81e7a"/>
<path d="M1484.11,737.10A98.0,98.0,0,0,0,1485.14,737.09L1484.77,713.89A74.8,74.8,0,0,1,1483.99,713.90Z" fill="#3040e0"/>
<path d="M1486.51,737.06A98.0,98.0,0,0,0,1490.27,736.87L1488.69,713.73A74.8,74.8,0,0,1,1485.82,713.87Z" fill="#8a2be2"/>
<path d="M1491.46,736.78A98.0,98.0,0,0,0,1496.90,736.19L1493.75,713.21A74.8,74.8,0,0,1,1489.60,713.66Z" fill="#8a2be2"/>
<path d="M1498.09,736.02A98.0,98.0,0,0,0,1498.93,735.89L1495.30,712.98A74.8,74.8,0,0,1,1494.66,713.08Z" fill="#f0a040"/>
<path d="M1500.62,735.61A98.0,98.0,0,0,0,1504.64,734.81L1499.66,712.16A74.8,74.8,0,0,1,1496.59,712.76Z" fill="#3fdc50"/>
<path d="M1506.14,734.47A98.0,98.0,0,0,0,1506.64,734.35L1501.19,711.80A74.8,74.8,0,0,1,1500.81,711.89Z" fill="#8fe8a8"/>
<path d="M1508.14,733.98A98.0,98.0,0,0,0,1508.96,733.76L1502.96,711.35A74.8,74.8,0,0,1,1502.33,711.52Z" fill="#bcd818"/>
<path d="M1510.78,733.26A98.0,98.0,0,0,0,1513.40,732.46L1506.34,710.36A74.8,74.8,0,0,1,1504.34,710.97Z" fill="#d020b0"/>
<path d="M1514.86,731.98A98.0,98.0,0,0,0,1515.34,731.82L1507.83,709.87A74.8,74.8,0,0,1,1507.46,709.99Z" fill="#d8e060"/>
<path d="M1516.31,731.48A98.0,98.0,0,0,0,1516.80,731.31L1508.94,709.48A74.8,74.8,0,0,1,1508.57,709.61Z" fill="#8fe8a8"/>
<path d="M1518.08,730.83A98.0,98.0,0,0,0,1522.36,729.11L1513.19,707.80A74.8,74.8,0,0,1,1509.92,709.12Z" fill="#3fdc50"/>
<path d="M1524.08,728.35A98.0,98.0,0,0,0,1524.55,728.13L1514.86,707.06A74.8,74.8,0,0,1,1514.50,707.22Z" fill="#8fe8a8"/>
<path d="M1525.64,727.63A98.0,98.0,0,0,0,1526.10,727.41L1516.04,706.50A74.8,74.8,0,0,1,1515.68,706.67Z" fill="#8fe8a8"/>
<path d="M1527.63,726.65A98.0,98.0,0,0,0,1528.40,726.26L1517.79,705.63A74.8,74.8,0,0,1,1517.21,705.92Z" fill="#40d020"/>
<path d="M1530.21,725.31A98.0,98.0,0,0,0,1530.66,725.06L1519.52,704.71A74.8,74.8,0,0,1,1519.18,704.90Z" fill="#8fe8a8"/>
<path d="M1533.19,723.63A98.0,98.0,0,0,0,1533.93,723.19L1522.01,703.28A74.8,74.8,0,0,1,1521.45,703.62Z" fill="#3fdc50"/>
<path d="M1536.40,721.66A98.0,98.0,0,0,0,1537.12,721.20L1524.45,701.76A74.8,74.8,0,0,1,1523.90,702.12Z" fill="#3fdc50"/>
<path d="M1538.12,720.54A98.0,98.0,0,0,0,1543.80,716.43L1529.55,698.12A74.8,74.8,0,0,1,1525.21,701.26Z" fill="#8a2be2"/>
<path d="M1546.33,714.39A98.0,98.0,0,0,0,1549.68,711.47L1534.04,694.34A74.8,74.8,0,0,1,1531.48,696.57Z" fill="#3fdc50"/>
<path d="M1550.93,710.30A98.0,98.0,0,0,0,1551.31,709.95L1535.28,693.18A74.8,74.8,0,0,1,1534.99,693.45Z" fill="#8fe8a8"/>
<path d="M1552.04,709.24A98.0,98.0,0,0,0,1552.41,708.88L1536.12,692.36A74.8,74.8,0,0,1,1535.84,692.63Z" fill="#8fe8a8"/>
<path d="M1553.74,707.54A98.0,98.0,0,0,0,1555.39,705.81L1538.39,690.02A74.8,74.8,0,0,1,1537.13,691.34Z" fill="#d81e7a"/>
<path d="M1556.66,704.42A98.0,98.0,0,0,0,1557.11,703.91L1539.71,688.57A74.8,74.8,0,0,1,1539.36,688.96Z" fill="#3fdc50"/>
<path d="M1557.79,703.14A98.0,98.0,0,0,0,1558.12,702.75L1540.48,687.68A74.8,74.8,0,0,1,1540.22,687.98Z" fill="#8fe8a8"/>
<path d="M1558.89,701.83A98.0,98.0,0,0,0,1559.44,701.17L1541.48,686.48A74.8,74.8,0,0,1,1541.07,686.98Z" fill="#3fdc50"/>
<path d="M1560.19,700.24A98.0,98.0,0,0,0,1563.48,695.87L1544.57,682.43A74.8,74.8,0,0,1,1542.06,685.77Z" fill="#4030e0"/>
<path d="M1563.78,695.45A98.0,98.0,0,0,0,1564.07,695.03L1545.02,681.79A74.8,74.8,0,0,1,1544.80,682.11Z" fill="#f06050"/>
<path d="M1564.46,694.47A98.0,98.0,0,0,0,1564.75,694.04L1545.54,681.04A74.8,74.8,0,0,1,1545.32,681.36Z" fill="#f06050"/>
<path d="M1565.13,693.47A98.0,98.0,0,0,0,1565.42,693.05L1546.05,680.28A74.8,74.8,0,0,1,1545.83,680.60Z" fill="#f06050"/>
<path d="M1565.98,692.19A98.0,98.0,0,0,0,1566.25,691.76L1546.69,679.29A74.8,74.8,0,0,1,1546.47,679.62Z" fill="#3fdc50"/>
<path d="M1566.89,690.74A98.0,98.0,0,0,0,1568.98,687.21L1548.77,675.82A74.8,74.8,0,0,1,1547.17,678.52Z" fill="#3fdc50"/>
<path d="M1569.56,686.16A98.0,98.0,0,0,0,1569.81,685.71L1549.40,674.68A74.8,74.8,0,0,1,1549.21,675.02Z" fill="#3fdc50"/>
<path d="M1570.37,684.65A98.0,98.0,0,0,0,1572.27,680.83L1551.28,670.95A74.8,74.8,0,0,1,1549.83,673.87Z" fill="#3fdc50"/>
<path d="M1572.71,679.90A98.0,98.0,0,0,0,1572.92,679.43L1551.77,669.88A74.8,74.8,0,0,1,1551.61,670.24Z" fill="#3fdc50"/>
<path d="M1573.40,678.33A98.0,98.0,0,0,0,1575.09,674.22L1553.43,665.91A74.8,74.8,0,0,1,1552.14,669.05Z" fill="#3fdc50"/>
<path d="M1575.51,673.10A98.0,98.0,0,0,0,1575.69,672.62L1553.89,664.68A74.8,74.8,0,0,1,1553.75,665.05Z" fill="#3fdc50"/>
<path d="M1576.20,671.17A98.0,98.0,0,0,0,1577.52,667.10L1555.28,660.47A74.8,74.8,0,0,1,1554.28,663.58Z" fill="#3fdc50"/>
<path d="M1577.85,665.95A98.0,98.0,0,0,0,1578.26,664.46L1555.85,658.46A74.8,74.8,0,0,1,1555.54,659.59Z" fill="#3070e8"/>
<path d="M1578.61,663.14A98.0,98.0,0,0,0,1579.60,658.81L1556.87,654.14A74.8,74.8,0,0,1,1556.11,657.45Z" fill="#d42020"/>
<path d="M1580.02,656.62A98.0,98.0,0,0,0,1580.85,651.21L1557.83,648.35A74.8,74.8,0,0,1,1557.19,652.47Z" fill="#d42020"/>
<path d="M1581.03,649.68A98.0,98.0,0,0,0,1581.10,649.00L1558.02,646.66A74.8,74.8,0,0,1,1557.96,647.18Z" fill="#f06060"/>
<path d="M1581.24,647.47A98.0,98.0,0,0,0,1581.51,643.37L1558.33,642.36A74.8,74.8,0,0,1,1558.13,645.49Z" fill="#8a2be2"/>
<path d="M1581.56,641.84A98.0,98.0,0,0,0,1581.59,640.64L1558.39,640.27A74.8,74.8,0,0,1,1558.37,641.19Z" fill="#d42020"/>
</svg>
</div></div></body></html>
